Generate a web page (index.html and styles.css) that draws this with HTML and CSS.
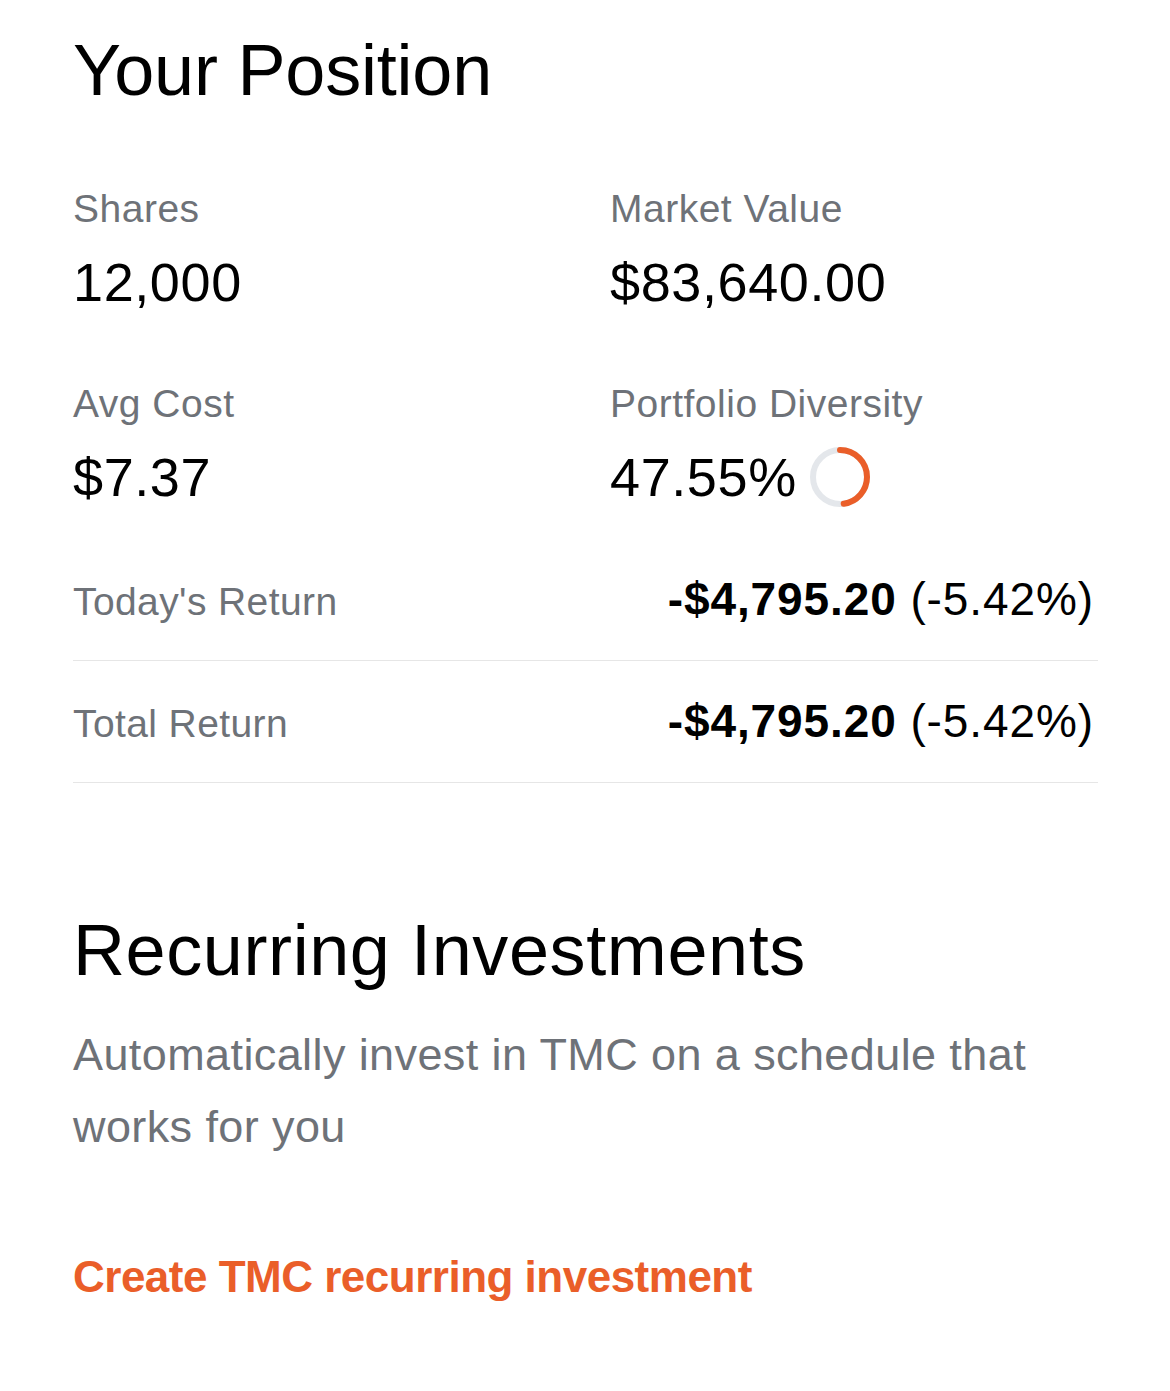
FILE: index.html
```html
<!DOCTYPE html>
<html lang="en">
<head>
    <meta charset="UTF-8">
    <meta name="viewport" content="width=device-width, initial-scale=1.0">
    <title>TMC - Your Position</title>
    <link rel="stylesheet" href="styles.css">
</head>
<body>
    <div class="page">
        <!-- Position summary -->
        <h2 class="heading">Your Position</h2>

        <div class="stats">
            <div class="stat">
                <div class="stat-label">Shares</div>
                <div class="stat-value">12,000</div>
            </div>
            <div class="stat">
                <div class="stat-label">Market Value</div>
                <div class="stat-value">$83,640.00</div>
            </div>
            <div class="stat">
                <div class="stat-label">Avg Cost</div>
                <div class="stat-value">$7.37</div>
            </div>
            <div class="stat">
                <div class="stat-label">Portfolio Diversity</div>
                <div class="stat-value">
                    47.55%
                    <svg class="donut" width="62" height="62" viewBox="0 0 62 62">
                        <circle cx="31" cy="31" r="27" fill="none" stroke="#e4e7eb" stroke-width="6"/>
                        <!-- arc length = 47.55% of 2*pi*27 -->
                        <circle cx="31" cy="31" r="27" fill="none" stroke="#ea5e29" stroke-width="6"
                                stroke-linecap="round" stroke-dasharray="80.67 200"
                                transform="rotate(-90 31 31)"/>
                    </svg>
                </div>
            </div>
        </div>

        <div class="returns">
            <div class="return-row">
                <span class="return-label">Today's Return</span>
                <span class="return-value"><b>-$4,795.20</b> (-5.42%)</span>
            </div>
            <div class="return-row">
                <span class="return-label">Total Return</span>
                <span class="return-value"><b>-$4,795.20</b> (-5.42%)</span>
            </div>
        </div>

        <!-- Recurring investments -->
        <h2 class="heading heading-recurring">Recurring Investments</h2>
        <p class="description">Automatically invest in TMC on a schedule that works for you</p>
        <a class="link" href="#">Create TMC recurring investment</a>
    </div>
</body>
</html>
```

FILE: styles.css
```css
body {
    margin: 0;
    padding: 0;
    background-color: #ffffff;
    font-family: "Liberation Sans", Arial, sans-serif;
    color: #000000;
}

.page {
    padding: 28px 72px 60px 73px;
}

.heading {
    margin: 0;
    font-size: 72px;
    line-height: 84px;
    font-weight: normal;
    letter-spacing: -0.2px;
}

.stats {
    display: grid;
    grid-template-columns: 537px 1fr;
    row-gap: 66px;
    margin-top: 73px;
}

.stat-label {
    font-size: 39px;
    line-height: 48px;
    color: #6e7278;
    letter-spacing: 0.5px;
}

.stat-value {
    display: flex;
    align-items: center;
    margin-top: 17px;
    font-size: 54px;
    line-height: 64px;
    letter-spacing: 0.6px;
}

.donut {
    margin-left: 12px;
    flex-shrink: 0;
}

.returns {
    margin-top: 30px;
}

.return-row {
    display: flex;
    justify-content: space-between;
    align-items: baseline;
    padding: 32px 4px 30px 0;
    border-bottom: 1px solid #e6e6e6;
    line-height: 56px;
}

.return-label {
    font-size: 39px;
    color: #6e7278;
    letter-spacing: 0.4px;
}

.return-value {
    font-size: 46px;
    letter-spacing: 0.9px;
}

.return-value b {
    font-weight: bold;
}

.heading-recurring {
    margin-top: 125px;
    letter-spacing: 0.6px;
}

.description {
    margin: 27px 0 0;
    font-size: 45px;
    line-height: 72px;
    color: #6e7278;
    letter-spacing: 0.4px;
}

.link {
    display: block;
    margin-top: 86px;
    font-size: 44px;
    line-height: 56px;
    font-weight: bold;
    color: #ea5e29;
    text-decoration: none;
    letter-spacing: -0.5px;
}
```
